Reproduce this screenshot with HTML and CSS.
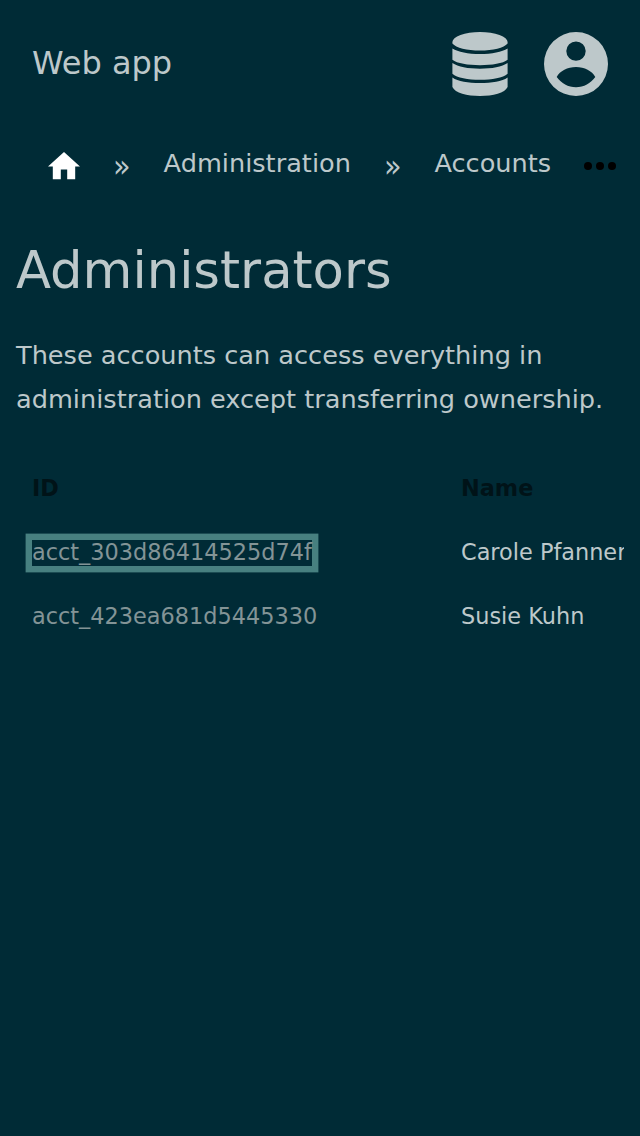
FILE: index.html
```html
<!DOCTYPE html>
<html lang="en">
<head>
<meta charset="utf-8">
<title>Administrators</title>
<link rel="stylesheet" href="styles.css">
</head>
<body>
<header class="topbar">
  <span class="brand">Web app</span>
  <svg class="database" viewBox="0 0 56 64"><path d="M.4 10A27.600 10 0 0 1 55.600 10V11.500C52 16 41 18.600 28 18.600S4 16 .4 11.500zM.4 16.500C6 20 16 22 28 22s22-2 27.600-5.500v11.300C51 31.500 40 33.200 28 33.200S5 31.500.4 27.800zM.4 31C6 34.800 16 36.700 28 36.700s22-1.900 27.600-5.700v10.700C51 46 40 47.700 28 47.700S5 46 .4 41.700zM.4 45.500C6 49.500 16 51 28 51s22-1.500 27.600-5.500V55C53 61 41 64 28 64S3 61 .4 55z"/></svg>
  <svg class="account" viewBox="0 0 64 64"><path fill-rule="evenodd" d="M32 0a32 32 0 1 0 0 64a32 32 0 1 0 0-64zm0 9.400a9.700 9.700 0 1 1 0 19.400a9.700 9.700 0 1 1 0-19.400zm0 45.800c-8 0-14.500-3.800-19.300-10.300C16 39 23.500 35 32 35s16 4 19.300 9.900C46.500 51.400 40 55.200 32 55.200z"/></svg>
</header>
<nav class="crumbs">
  <svg class="home" viewBox="2 3 20 17"><path d="M10 20v-6h4v6h5v-8h3L12 3 2 12h3v8z"/></svg>
  <span class="sep">»</span>
  <span class="crumb">Administration</span>
  <span class="sep">»</span>
  <span class="crumb">Accounts</span>
  <svg class="more" viewBox="0 0 32 8"><circle cx="4" cy="4" r="4"/><circle cx="16" cy="4" r="4"/><circle cx="28" cy="4" r="4"/></svg>
</nav>
<main class="content">
  <h1 class="title">Administrators</h1>
  <p class="description">These accounts can access everything in administration except transferring ownership.</p>
  <div class="scroller">
    <table class="accounts">
      <tr><th class="id">ID</th><th>Name</th></tr>
      <tr><td><a class="link focused">acct_303d86414525d74f</a></td><td>Carole Pfanner</td></tr>
      <tr><td><a class="link">acct_423ea681d5445330</a></td><td>Susie Kuhn</td></tr>
    </table>
  </div>
</main>
</body>
</html>
```
FILE: styles.css
```css
body { margin: 0; background: #002b36; color: #bdc8ca; font: 22.400px/32px "DejaVu Sans", sans-serif; }
.topbar { display: flex; align-items: center; height: 128px; padding: 0 32px; box-sizing: border-box; fill: #bdc8ca; }
.brand { flex: 1; font-size: 32px; padding-bottom: 2px; }
.database { width: 56px; height: 64px; margin-right: 36px; }
.account { width: 64px; height: 64px; }
.crumbs { display: flex; align-items: center; height: 72px; padding-left: 48px; font-size: 25.600px; }
.crumb { padding-bottom: 2px; }
.home { width: 32px; height: 27.200px; fill: #fff; margin-top: 4px; }
.sep { margin: 0 33px; padding-top: 3px; font-family: "DejaVu Sans Condensed", "DejaVu Sans", sans-serif; font-stretch: condensed; font-size: 32px; width: 17.600px; }
.more { width: 32px; height: 8px; margin: 4px 0 0 33px; }
.content { padding: 0 16px; }
.title { margin: 38px 0 0; font-size: 51.200px; line-height: 64px; font-weight: 400; }
.description { margin: 31px 0 0; font-size: 25.600px; line-height: 44px; }
.scroller { margin-top: 35px; overflow: hidden; }
.accounts { border-spacing: 0; width: 700px; table-layout: fixed; white-space: nowrap; }
.accounts th, .accounts td { height: 64px; padding: 0 16px; text-align: left; }
.accounts th { color: #001318; }
.accounts .id { width: 397px; }
.link { color: #839496; }
.focused { display: inline-block; line-height: 24px; padding-bottom: 2px; box-shadow: 0 0 0 6.400px #478080; }
```
